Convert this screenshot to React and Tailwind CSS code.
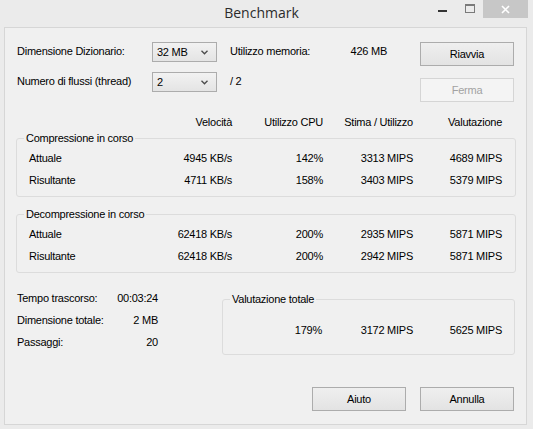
import React from "react";

const cols = ["w-[80px]", "w-[91px]", "w-[90px]", "w-[89px]"];

function Row({ label, values }) {
  return (
    <div className="flex items-center h-[22px]">
      <div className="w-[135px] pl-3">{label}</div>
      {values.map((v, i) => (
        <div key={i} className={`${cols[i]} text-right`}>
          {v}
        </div>
      ))}
    </div>
  );
}

function Group({ title, className = "", children }) {
  return (
    <fieldset className={`border border-[#dcdcdc] rounded-[3px] ${className}`}>
      <legend className="ml-[7px] px-[2px] leading-[13px]">{title}</legend>
      {children}
    </fieldset>
  );
}

function Combo({ value }) {
  return (
    <div className="w-[65px] h-[20px] flex items-center justify-between pl-[4px] pr-[8px] border border-[#acacac] bg-linear-to-b from-[#f2f2f2] to-[#e4e4e4]">
      <span>{value}</span>
      <svg width="7" height="5" viewBox="0 0 7 5">
        <path d="M0.5 0.8 L3.5 3.8 L6.5 0.8" fill="none" stroke="#4a4a4a" strokeWidth="1.3" />
      </svg>
    </div>
  );
}

function Button({ children, disabled }) {
  return (
    <button
      disabled={disabled}
      className={
        disabled
          ? "w-[94px] h-[24px] border border-[#d5d5d5] bg-[#f4f4f4] text-[#a2a2a2]"
          : "w-[94px] h-[24px] border border-[#acacac] bg-linear-to-b from-[#efefef] to-[#e3e3e3] text-black"
      }
    >
      {children}
    </button>
  );
}

function TitleBar() {
  return (
    <div className="h-[27px] grid grid-cols-[1fr_auto_1fr]">
      <div />
      <div className="pr-[10px] pt-[3px] text-[14px] leading-[20px] text-[#2b2b2b] font-['Open_Sans',sans-serif]">
        Benchmark
      </div>
      <div className="flex justify-end items-start pr-[5px]">
        <div className="w-[27px] h-[18px] flex items-center justify-center">
          <div className="w-[9px] h-[2px] bg-[#333] mt-[4px]" />
        </div>
        <div className="w-[27px] h-[18px] flex items-start justify-center pt-[4px]">
          <div className="w-[10px] h-[9px] border border-[#7a7a7a] border-t-2" />
        </div>
        <div className="w-[45px] h-[18px] bg-[#c7c7c7] flex items-center justify-center">
          <svg width="9" height="9" viewBox="0 0 9 9">
            <path d="M1 1 L8 8 M8 1 L1 8" stroke="#fff" strokeWidth="1.6" />
          </svg>
        </div>
      </div>
    </div>
  );
}

export default function App() {
  return (
    <div className="w-[533px] h-[429px] bg-[#ebebeb] overflow-hidden">
      <TitleBar />

      <div className="ml-[4px] w-[523px] h-[398px] border border-[#d6d6d6] bg-[#f0f0f0] text-[11px] leading-[13px] tracking-[-0.25px] text-black font-['Liberation_Sans',Arial,sans-serif]">
        {/* Settings */}
        <div className="flex pl-3 pt-[14px]">
          <div className="flex flex-col gap-[10px]">
            <div className="flex items-center h-[20px]">
              <span className="w-[135px] -mt-[2px]">Dimensione Dizionario:</span>
              <Combo value="32 MB" />
              <div className="ml-[13px] w-[157px] flex justify-between -mt-[2px]">
                <span>Utilizzo memoria:</span>
                <span>426 MB</span>
              </div>
            </div>
            <div className="flex items-center h-[20px]">
              <span className="w-[135px] -mt-[2px]">Numero di flussi (thread)</span>
              <Combo value="2" />
              <span className="ml-[13px] -mt-[2px]">/ 2</span>
            </div>
          </div>
          <div className="ml-[33px] flex flex-col gap-[12px]">
            <Button>Riavvia</Button>
            <Button disabled>Ferma</Button>
          </div>
        </div>

        {/* Column headers */}
        <div className="pl-3 mt-[14px]">
          <div className="flex h-[13px]">
            <div className="w-[135px]" />
            <div className="w-[80px] text-right">Velocità</div>
            <div className="w-[91px] text-right">Utilizzo CPU</div>
            <div className="w-[90px] text-right">Stima / Utilizzo</div>
            <div className="w-[89px] text-right">Valutazione</div>
          </div>
        </div>

        <Group title="Compressione in corso" className="ml-[11px] mt-[3px] w-[500px] pt-[2px] pb-[5px]">
          <Row label="Attuale" values={["4945 KB/s", "142%", "3313 MIPS", "4689 MIPS"]} />
          <Row label="Risultante" values={["4711 KB/s", "158%", "3403 MIPS", "5379 MIPS"]} />
        </Group>

        <Group title="Decompressione in corso" className="ml-[11px] mt-[11px] w-[500px] pt-[2px] pb-[5px]">
          <Row label="Attuale" values={["62418 KB/s", "200%", "2935 MIPS", "5871 MIPS"]} />
          <Row label="Risultante" values={["62418 KB/s", "200%", "2942 MIPS", "5871 MIPS"]} />
        </Group>

        {/* Totals */}
        <div className="flex items-start pl-3 mt-[14px]">
          <div className="w-[141px] flex flex-col">
            <div className="h-[22px] flex items-center justify-between">
              <span>Tempo trascorso:</span>
              <span>00:03:24</span>
            </div>
            <div className="h-[22px] flex items-center justify-between">
              <span>Dimensione totale:</span>
              <span>2 MB</span>
            </div>
            <div className="h-[22px] flex items-center justify-between">
              <span>Passaggi:</span>
              <span>20</span>
            </div>
          </div>
          <Group title="Valutazione totale" className="ml-[64px] mt-[6px] w-[293px] pt-[13px] pb-[13px]">
            <div className="flex items-center h-[22px]">
              <div className="w-[99px] text-right">179%</div>
              <div className="w-[91px] text-right">3172 MIPS</div>
              <div className="w-[89px] text-right">5625 MIPS</div>
            </div>
          </Group>
        </div>

        <div className="flex justify-end gap-[14px] pr-3 mt-[32px]">
          <Button>Aiuto</Button>
          <Button>Annulla</Button>
        </div>
      </div>
    </div>
  );
}
